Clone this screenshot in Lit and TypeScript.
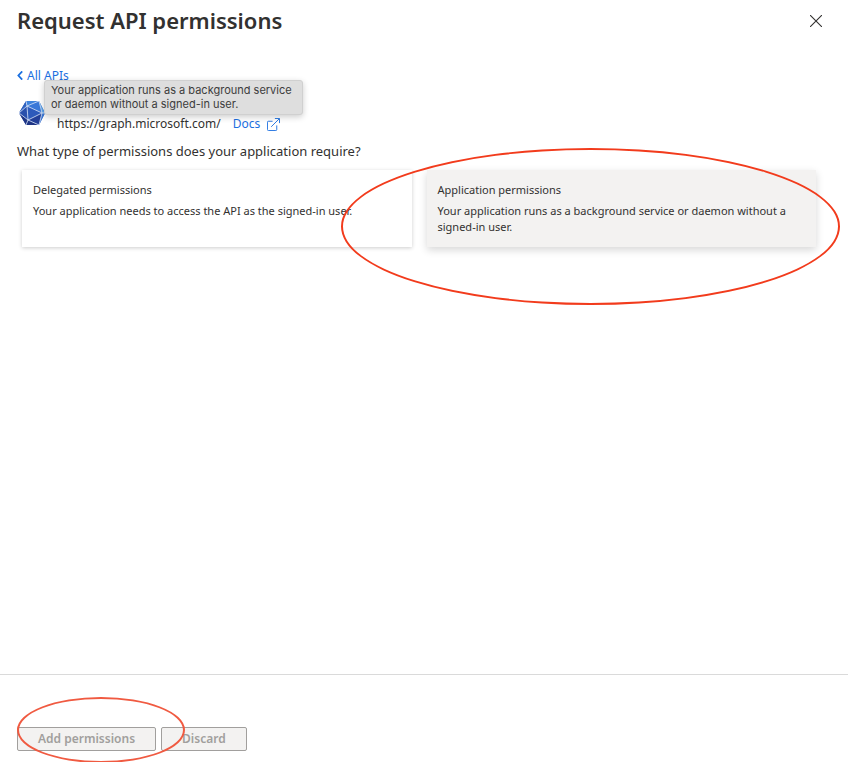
import { LitElement, html, css } from "lit";
import { customElement, property } from "lit/decorators.js";

@customElement("permission-card")
class PermissionCard extends LitElement {
  @property() heading = "";
  @property() description = "";
  @property({ type: Boolean }) active = false;

  static styles = css`
    :host {
      display: block;
      position: relative;
    }
    .card {
      display: block;
      box-sizing: border-box;
      width: 100%;
      height: 100%;
      min-height: 77px;
      margin: 0;
      padding: 12px 11px;
      border: 0;
      background: #fff;
      box-shadow: 0 1px 4px rgba(0, 0, 0, 0.2);
      color: #323130;
      font: 400 11px/16px "Noto Sans", "Open Sans", sans-serif;
      text-align: left;
      cursor: pointer;
    }
    .card.active {
      background: #f3f2f1;
      box-shadow: 0 3px 8px rgba(0, 0, 0, 0.16);
    }
    .inner {
      display: flex;
      flex-direction: column;
      justify-content: flex-start;
      gap: 5px;
      height: 100%;
    }
  `;

  render() {
    return html`
      <button class="card ${this.active ? "active" : ""}" type="button">
        <span class="inner">
          <span>${this.heading}</span>
          <span>${this.description}</span>
        </span>
      </button>
      <slot></slot>
    `;
  }
}

@customElement("app-root")
class AppRoot extends LitElement {
  static styles = css`
    :host {
      display: flex;
      flex-direction: column;
      box-sizing: border-box;
      min-height: 100vh;
      overflow: hidden;
      background: #fff;
      color: #323130;
      font-family: "Noto Sans", "Open Sans", sans-serif;
    }
    header {
      display: flex;
      align-items: center;
      justify-content: space-between;
      height: 42px;
      padding: 0 24px 0 17px;
    }
    h1 {
      margin: 0 0 2px;
      font-size: 22px;
      line-height: 32px;
      font-weight: 600;
    }
    .close {
      display: flex;
      padding: 2px;
      border: 0;
      background: none;
      color: #323130;
      cursor: pointer;
    }
    main {
      flex: 1;
      padding: 21px 32px 0 17px;
    }
    a {
      color: #1b6fe0;
      text-decoration: none;
    }
    .back {
      display: inline-flex;
      align-items: center;
      gap: 4px;
      font-size: 12px;
      line-height: 18px;
    }
    .api {
      position: relative;
      display: flex;
      align-items: flex-end;
      gap: 12px;
      height: 48px;
      font-size: 12px;
      line-height: 18px;
    }
    .logo {
      flex: none;
      width: 26px;
      height: 24px;
      margin: 0 0 8px 2px;
    }
    .links {
      display: flex;
      align-items: center;
      gap: 12px;
    }
    .docs {
      display: flex;
      align-items: center;
      gap: 7px;
    }
    .tooltip {
      position: absolute;
      top: -5px;
      left: 27px;
      box-sizing: border-box;
      width: 259px;
      padding: 2px 6px 3px;
      border: 1px solid #d0d0d0;
      border-radius: 3px;
      background: #dedede;
      box-shadow: 0 2px 6px rgba(0, 0, 0, 0.2);
      color: #3c3c3c;
      font: 400 11px/14px Inter, "Liberation Sans", sans-serif;
    }
    h2 {
      margin: 8px 0 9px;
      font-size: 13px;
      line-height: 20px;
      font-weight: 400;
    }
    .cards {
      display: grid;
      grid-template-columns: 1fr 1fr;
      gap: 15px;
      padding-left: 5px;
    }
    footer {
      display: flex;
      align-items: flex-end;
      gap: 5px;
      box-sizing: border-box;
      height: 88px;
      padding: 0 17px 11px;
      border-top: 1px solid #dadada;
    }
    .action {
      position: relative;
      display: flex;
    }
    .action button {
      height: 24px;
      padding: 0 20px;
      border: 1px solid #a19f9d;
      border-radius: 2px;
      background: #f3f2f1;
      color: #a19f9d;
      font: 600 12px/18px "Noto Sans", "Open Sans", sans-serif;
    }
    .ring {
      position: absolute;
      z-index: 1;
      border: 2px solid #f23b1c;
      border-radius: 50%;
      pointer-events: none;
    }
    .ring.card-ring {
      inset: -22px -24px -58px -86px;
    }
    .ring.add-ring {
      inset: -30px -29px -12px 0;
      border-color: #f05a41;
    }
  `;

  render() {
    return html`
      <header>
        <h1>Request API permissions</h1>
        <button class="close" type="button" aria-label="Close">
          <svg width="12" height="12" viewBox="0 0 12 12" fill="none" stroke="currentColor" stroke-width="1.1">
            <path d="M0 0L12 12M12 0L0 12" />
          </svg>
        </button>
      </header>
      <main>
        <a class="back" href="#apis">
          <svg width="6" height="9" viewBox="0 0 6 9" fill="none" stroke="currentColor" stroke-width="1.8">
            <path d="M5.2 0.4L1.4 4.5L5.2 8.6" />
          </svg>
          All APIs
        </a>
        <div class="api">
          <svg class="logo" viewBox="0 0 26 24" aria-hidden="true">
            <path d="M7 0H20L26 12L20 24H7L0 12Z" fill="#2b50ae" />
            <path d="M7 0H20L8 5Z" fill="#3f83dc" />
            <path d="M20 0L23 12L8 5Z" fill="#3a78d8" />
            <path d="M20 0L26 12H23Z" fill="#5aa5ee" />
            <path d="M7 0L8 5L0 12Z" fill="#2f62c0" />
            <path d="M0 12L8 5L9 19Z" fill="#2a50ac" />
            <path d="M8 5L23 12L9 19Z" fill="#2d5abb" />
            <path d="M23 12H26L20 24Z" fill="#3b79d6" />
            <path d="M9 19L23 12L20 24Z" fill="#233f98" />
            <path d="M0 12L9 19L20 24H7Z" fill="#1f3585" />
            <path
              d="M8 5L23 12L9 19ZM7 0L8 5L20 0L23 12L20 24L9 19L7 24M8 5L0 12L9 19M23 12H26"
              fill="none"
              stroke="#dce9fa"
              stroke-width="0.8"
            />
          </svg>
          <div class="links">
            <span>https://graph.microsoft.com/</span>
            <a class="docs" href="#docs">
              Docs
              <svg width="13" height="13" viewBox="0 0 14 14" fill="none" stroke="currentColor" stroke-width="1">
                <path d="M6 3.5H1.5Q0.5 3.5 0.5 4.5V12.5Q0.5 13.5 1.5 13.5H9.5Q10.5 13.5 10.5 12.5V8M4.5 9.5L13 1M8.5 0.5H13.5V5.5" />
              </svg>
            </a>
          </div>
          <div class="tooltip" role="tooltip">
            Your application runs as a background service or daemon without a signed-in user.
          </div>
        </div>
        <h2>What type of permissions does your application require?</h2>
        <div class="cards">
          <permission-card
            heading="Delegated permissions"
            description="Your application needs to access the API as the signed-in user."
          ></permission-card>
          <permission-card
            active
            heading="Application permissions"
            description="Your application runs as a background service or daemon without a signed-in user."
          >
            <span class="ring card-ring"></span>
          </permission-card>
        </div>
      </main>
      <footer>
        <div class="action">
          <button type="button" disabled>Add permissions</button>
          <span class="ring add-ring"></span>
        </div>
        <div class="action">
          <button type="button" disabled>Discard</button>
        </div>
      </footer>
    `;
  }
}
